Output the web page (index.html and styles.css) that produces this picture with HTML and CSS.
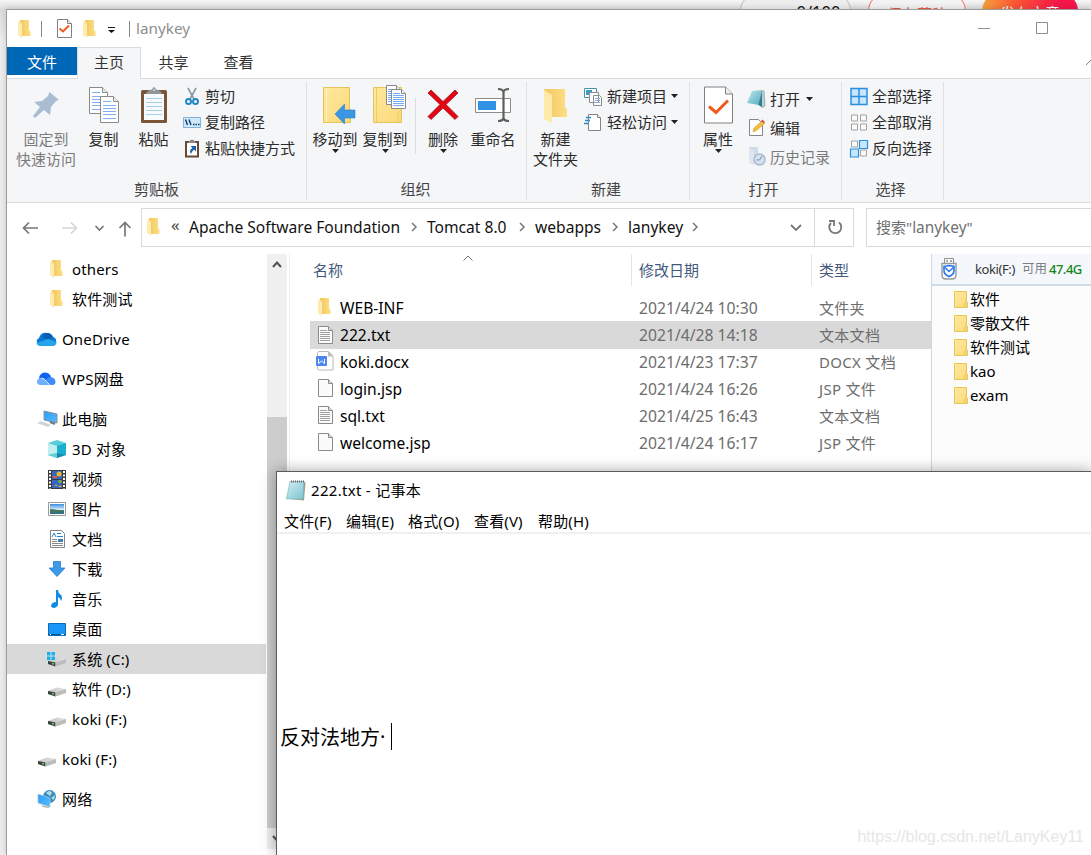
FILE: index.html
```html
<!DOCTYPE html>
<html lang="zh-CN">
<head>
<meta charset="utf-8">
<title>lanykey</title>
<link rel="stylesheet" href="styles.css">
</head>
<body>
<svg class="defs" aria-hidden="true">
  <defs>
    <linearGradient id="gold" x1="0" x2="1" y1="0" y2="1"><stop offset="0" stop-color="#ffe9a0"/><stop offset="1" stop-color="#fad978"/></linearGradient>
    <linearGradient id="goldEdge" x1="0" x2="1"><stop offset="0" stop-color="#f0c75f"/><stop offset="1" stop-color="#fddf85"/></linearGradient>
    <linearGradient id="teal" x1="0" x2="1" y1="0" y2="1"><stop offset="0" stop-color="#c3e9ef"/><stop offset="1" stop-color="#4fa9bf"/></linearGradient>
    <linearGradient id="pad" x1="0" x2="1" y1="0" y2="1"><stop offset="0" stop-color="#d3eff3"/><stop offset="1" stop-color="#7cc3d2"/></linearGradient>
    <linearGradient id="screen" x1="0" x2="1" y1="0" y2="1"><stop offset="0" stop-color="#2b9bf5"/><stop offset="1" stop-color="#5bbcff"/></linearGradient>
    <linearGradient id="metal" x1="0" x2="1"><stop offset="0" stop-color="#c4c4c4"/><stop offset="1" stop-color="#e4e4e4"/></linearGradient>
    <linearGradient id="sky" x2="0" y2="1"><stop offset="0" stop-color="#3b8de0"/><stop offset=".55" stop-color="#d6ecfa"/><stop offset=".6" stop-color="#4d8068"/><stop offset="1" stop-color="#2e6d8c"/></linearGradient>
  </defs>
  <symbol id="folder" viewBox="0 0 13 18"><path d="M2 0h9v10l1.5 1.5V16H3z" fill="url(#goldEdge)"/><path d="M0 .5L4 4v14L0 15z" fill="#ffeab0"/></symbol>
  <symbol id="folder-flat" viewBox="0 0 14 17"><path d="M.5.5h12v11h1v5H.5z" fill="url(#gold)" stroke="#e9c557"/><path d="M11 16v-4l1-1.5" fill="none" stroke="#e9c04a"/></symbol>
  <symbol id="page" viewBox="0 0 15 18"><path d="M.5.5h10l4 4v13H.5z" fill="#fbfbfb" stroke="#8b8b8b"/><path d="M10.500.5v4h4" fill="#ddd" stroke="#8b8b8b"/></symbol>
  <symbol id="text-page" viewBox="0 0 15 18"><use href="#page" width="15" height="18"/><path d="M2 4.500h7M2 6.500h10M2 8.500h10M2 10.500h10M2 12.500h10M2 14.500h10" stroke="#a0a0a0"/></symbol>
  <symbol id="check-page" viewBox="0 0 29 37"><path d="M.5.5h21l7 7v29H.5z" fill="#fff" stroke="#808080"/><path d="M21.500.5v7h7" fill="#eee" stroke="#808080"/><path d="M5 20l7 6L24 14" fill="none" stroke="#ef5a1d" stroke-width="3"/></symbol>
  <symbol id="drive" viewBox="0 0 18 10"><path d="M0 4L9 .5 18 2v4L7.500 9.500 0 7z" fill="url(#metal)"/><path d="M0 4l7.500 1.500V9.500L0 7z" fill="#3e3e3e"/><path d="M7.500 5.500L18 2v4L7.500 9.500z" fill="#bcbcbc"/><path d="M4 6.500l2 .5" stroke="#4fdc62" stroke-width="1.500"/></symbol>
  <symbol id="lined" viewBox="0 0 19 27"><path d="M.5.5h13l5 5v21H.5z" fill="#fff" stroke="#8a8a8a"/><path d="M13.500.5v5h5" fill="#eee" stroke="#8a8a8a"/><path d="M3 5.500h8M3 9.500h13M3 12.500h13M3 15.500h13M3 18.500h13M3 22.500h13" stroke="#7fb0f5"/></symbol>
  <symbol id="lined-sm" viewBox="0 0 15 20"><path d="M.5.5h10l4 4v15H.5z" fill="#fff" stroke="#8a8a8a"/><path d="M10.500.5v4h4" fill="#eee" stroke="#8a8a8a"/><path d="M2 4.500h7M2 6.500h11M2 8.500h11M2 10.500h11M2 12.500h11M2 14.500h11M2 16.500h11" stroke="#74a9f7"/></symbol>
  <symbol id="tri" viewBox="0 0 7 4"><path d="M0 0h7L3.500 4z" fill="#222"/></symbol>
</svg>

<div class="backdrop">
  <span class="pill count">0/100</span>
  <span class="pill draft">保存草稿</span>
  <span class="pill publish">发布文章</span>
</div>

<section class="explorer">
  <header class="titlebar">
    <svg class="tb-folder" width="13" height="18"><use href="#folder"/></svg>
    <i class="tb-sep"></i>
    <svg class="tb-check" width="15" height="19" viewBox="0 0 15 19"><path d="M.5.5h10l4 4v14H.5z" fill="#fff" stroke="#808080"/><path d="M10.500.5v4h4" fill="#eee" stroke="#808080"/><path d="M2.500 9.500l3.500 3 6-6" fill="none" stroke="#ef5a1d" stroke-width="2"/></svg>
    <svg class="tb-folder" width="13" height="18"><use href="#folder"/></svg>
    <svg class="tb-more" width="7" height="6" viewBox="0 0 7 6"><path d="M0 0h7v1H0zM0 3h7L3.500 6z" fill="#111"/></svg>
    <i class="tb-sep second"></i>
    <span class="tb-title">lanykey</span>
    <svg class="tb-ctl" width="71" height="13" viewBox="0 0 71 13" fill="none" stroke="#8f8f8f"><path d="M0 6.500h12M58.500.5h11v11h-11z"/></svg>
  </header>

  <nav class="tabs">
    <a class="tab file">文件</a><a class="tab active">主页</a><a class="tab">共享</a><a class="tab">查看</a>
    <svg class="collapse" width="12" height="7" viewBox="0 0 12 7"><path d="M1 6l5-5 5 5" fill="none" stroke="#888"/></svg>
  </nav>

  <div class="ribbon">
    <div class="group g-clip">
      <div class="tools">
        <div class="big pin muted"><svg width="28" height="36" viewBox="0 0 28 36"><path d="M17.500 5L27 13l-3 1-5 6-1 8-6-5L3 31l-2-2 7-9-6-5 8-1 6-5z" fill="#a9bcd3"/></svg><span>固定到<br>快速访问</span></div>
        <div class="big copy"><svg width="30" height="36" viewBox="0 0 30 36"><use href="#lined" width="19" height="27"/><use href="#lined" x="11" y="9" width="19" height="27"/></svg><span>复制</span></div>
        <div class="big paste"><svg width="26" height="36" viewBox="0 0 26 36"><rect width="26" height="33" y="3" rx="1.500" fill="#7a5538"/><path d="M3 7h20v26H3z" fill="#f7fbfd"/><path d="M5 11.500h16M5 15.500h16M5 19.500h16M5 23.500h16M5 27.500h16" stroke="#a7d0e8"/><path d="M5 7q1-4 6-4.500Q13-2.500 15 2.500q5 .5 6 4.500z" fill="#8f979b"/><circle cx="13" cy="3" r="1" fill="#ddd"/></svg><span>粘贴</span></div>
        <div class="smalls">
          <div class="small"><svg width="18" height="19" viewBox="0 0 18 19" fill="none"><path d="M5 1l6.500 12M13 1L6.500 13" stroke="#8c99a3" stroke-width="1.600"/><circle cx="5.500" cy="14.500" r="2.500" stroke="#2287c9" stroke-width="2"/><circle cx="12.500" cy="14.500" r="2.500" stroke="#2287c9" stroke-width="2"/></svg>剪切</div>
          <div class="small"><svg width="18" height="19" viewBox="0 0 18 19"><path d="M.5 4.500h17v10H.5z" fill="#cfe9fa" stroke="#7fb4dc"/><path d="M2.500 6.500l2 5.500M6 6.500l2 5.500M10 11.500h1.500M12.500 11.500H14M15 11.500h1.500" stroke="#163b66" stroke-width="1.400"/></svg>复制路径</div>
          <div class="small"><svg width="18" height="19" viewBox="0 0 18 19"><path d="M3 3h12v14.500H3z" fill="#fff" stroke="#68482f" stroke-width="2"/><path d="M5 4q0-2 4-3.500Q13 2 13 4z" fill="#888"/><path d="M7.500 7H13v5.500l-2-2Q8.500 13 8 15q-2.500-3.500 1.500-6z" fill="#1d5ea8"/></svg>粘贴快捷方式</div>
        </div>
      </div>
      <div class="caption">剪贴板</div>
    </div>

    <div class="group g-org">
      <div class="tools">
        <div class="big shifted"><svg width="34" height="38" viewBox="0 0 34 38"><path d="M1.500 1.500h26v22h1v13h-27z" fill="url(#gold)" stroke="#e6c25b"/><path d="M4.500 2v34" stroke="#fff3c5"/><path d="M13 28l9.500-10v6H33v8H22.500v6z" fill="#3b97e4" stroke="#2980cd" stroke-width=".6"/></svg><span>移动到</span><svg class="drop" width="7" height="4"><use href="#tri"/></svg></div>
        <div class="big shifted"><svg width="34" height="38" viewBox="0 0 34 38"><path d="M1.500 1.500h28v35h-28z" fill="url(#gold)" stroke="#e6c25b"/><path d="M4.500 2v34M26 36V27l3-3" fill="none" stroke="#efcc67"/><use href="#lined-sm" x="14" y="-1" width="15" height="20"/><use href="#lined-sm" x="19" y="3" width="15" height="20"/></svg><span>复制到</span><svg class="drop" width="7" height="4"><use href="#tri"/></svg></div>
        <i class="inner-sep"></i>
        <div class="big del"><svg width="32" height="38" viewBox="0 0 32 38"><path d="M1 7l3-3 12 11.500L28 4l3 3-12 11.500L31 30.500l-3 3L16 22 4 33.500l-3-3 12-12z" fill="#e30613" stroke="#a5121d" stroke-width=".8"/></svg><span>删除</span><svg class="drop" width="7" height="4"><use href="#tri"/></svg></div>
        <div class="big ren"><svg width="36" height="38" viewBox="0 0 36 38"><path d="M.5 12.500h35v14H.5z" fill="#fff" stroke="#8d8d8d"/><path d="M3 15h18v9H3z" fill="#2f92e4"/><path d="M23 3q5 0 5.500 3 .5-3 5.500-3M23 35q5 0 5.500-3 .5 3 5.500 3M28.500 5v28" fill="none" stroke="#5f5f5f" stroke-width="2.200"/></svg><span>重命名</span></div>
      </div>
      <div class="caption">组织</div>
    </div>

    <div class="group g-new">
      <div class="tools">
        <div class="big"><svg width="26" height="36" viewBox="0 0 26 36"><path d="M1 2h21v18l2 2v8H5z" fill="url(#goldEdge)"/><path d="M1 3l8 5v28l-8-4z" fill="#ffe9a8"/></svg><span>新建<br>文件夹</span></div>
        <div class="smalls">
          <div class="small"><svg width="18" height="19" viewBox="0 0 18 19" fill="#fff" stroke="#8c8c8c"><path d="M.5 1.500h12v9H.5z" stroke="#4a90a8"/><path d="M2 3h6v5H2z" fill="#3f9bc6" stroke="none"/><path d="M5.500 5.500h9v10h-9zM9.500 8.500h6l2 2v8h-8z"/><path d="M11 11.500h5M11 13.500h5M11 15.500h5" stroke="#88aadb"/></svg>新建项目<svg class="arrow" width="7" height="4"><use href="#tri"/></svg></div>
          <div class="small"><svg width="18" height="19" viewBox="0 0 18 19" fill="#fff"><path d="M4.500 1.500h9l3 3v13h-12z" stroke="#858585"/><path d="M13.500 1.500v3h3" stroke="#858585"/><path d="M2 4.500h5M1 7.500h5M0 10.500h4" stroke="#2d8cc8" stroke-width="1.300"/></svg>轻松访问<svg class="arrow" width="7" height="4"><use href="#tri"/></svg></div>
        </div>
      </div>
      <div class="caption">新建</div>
    </div>

    <div class="group g-open">
      <div class="tools">
        <div class="big"><svg width="29" height="37"><use href="#check-page"/></svg><span>属性</span><svg class="drop" width="7" height="4"><use href="#tri"/></svg></div>
        <div class="smalls">
          <div class="small"><svg width="19" height="19" viewBox="0 0 19 19"><path d="M14 1.500l3 .5 1 15-3 1.500-3-3z" fill="#bcd1d5" stroke="#7b898b" stroke-width=".6"/><path d="M5 2l10-1-3 15-12-2z" fill="url(#teal)"/><path d="M15 2l-3.500 14 3.500 2z" fill="#337c8f"/></svg>打开<svg class="arrow" width="7" height="4"><use href="#tri"/></svg></div>
          <div class="small"><svg width="19" height="19" viewBox="0 0 19 19"><path d="M2.500 1.500h9l4 4v12h-13z" fill="#fff" stroke="#858585"/><path d="M6 14l1-4 8-7 2.500 2.500-8 7z" fill="#f6bd38" stroke="#c78c20" stroke-width=".5"/><path d="M14 3l1.500-1.500L18 4l-1 1.500z" fill="#dd5148"/></svg>编辑</div>
          <div class="small muted"><svg width="19" height="19" viewBox="0 0 19 19"><path d="M2 0h9v16H5z" fill="#d0dbea"/><path d="M2 1l5 3v14l-5-2z" fill="#dfe6f2"/><circle cx="12.500" cy="12.500" r="5.500" fill="#d8e1ee" stroke="#aabbd1" stroke-width="1.500"/><path d="M15 9l-2.500 4H9.500" fill="none" stroke="#7c8faa"/></svg>历史记录</div>
        </div>
      </div>
      <div class="caption">打开</div>
    </div>

    <div class="group g-sel">
      <div class="tools">
        <div class="smalls">
          <div class="small"><svg width="18" height="19" viewBox="0 0 18 19"><path d="M1 1.500h8v8H1zM9 1.500h8v8H9zM1 9.500h8v8H1zM9 9.500h8v8H9z" fill="#c8e7fd" stroke="#2a8fdd" stroke-width="1.500"/></svg>全部选择</div>
          <div class="small"><svg width="18" height="19" viewBox="0 0 18 19"><path d="M1.500 2h6v6h-6zM10.500 2h6v6h-6zM1.500 11h6v6h-6zM10.500 11h6v6h-6z" fill="#fbfbfb" stroke="#a2a2a2"/></svg>全部取消</div>
          <div class="small"><svg width="18" height="19" viewBox="0 0 18 19"><path d="M1.500 2h6v6h-6zM10.500 11h6v6h-6z" fill="#fbfbfb" stroke="#a2a2a2"/><path d="M9.500 1.500h8v8h-8zM.5 10h8v8h-8z" fill="#c8e7fd" stroke="#2a8fdd" stroke-width="1.200"/></svg>反向选择</div>
        </div>
      </div>
      <div class="caption">选择</div>
    </div>
  </div>

  <div class="navrow">
    <svg class="arrows" width="112" height="20" viewBox="0 0 112 20" fill="none" stroke="#777" stroke-width="1.700"><path d="M16 10H1.500M7 4.500L1.500 10 7 15.500"/><path d="M40 10h14.500M49 4.500l5.500 5.500-5.500 5.500" stroke="#d6d6d6"/><path d="M73.500 8l4 4 4-4M103 18.500V4.500M97.500 10l5.500-5.500 5.500 5.500"/></svg>
    <div class="address">
      <svg width="13" height="18"><use href="#folder"/></svg>
      <span class="laquo">«</span>
      <span class="crumb c1">Apache Software Foundation</span><svg class="chev" width="6" height="10" viewBox="0 0 6 10"><path d="M1 1l4 4-4 4"/></svg>
      <span class="crumb c2">Tomcat 8.0</span><svg class="chev" width="6" height="10" viewBox="0 0 6 10"><path d="M1 1l4 4-4 4"/></svg>
      <span class="crumb c3">webapps</span><svg class="chev" width="6" height="10" viewBox="0 0 6 10"><path d="M1 1l4 4-4 4"/></svg>
      <span class="crumb c4">lanykey</span><svg class="chev" width="6" height="10" viewBox="0 0 6 10"><path d="M1 1l4 4-4 4"/></svg>
      <svg class="addr-drop" width="12" height="8" viewBox="0 0 12 8"><path d="M1 1l5 5 5-5" fill="none" stroke="#777" stroke-width="1.800"/></svg>
      <span class="refresh"><svg width="16" height="17" viewBox="0 0 16 17" fill="none" stroke="#777" stroke-width="1.800"><path d="M4 4a6 6 0 1 0 8-.5M2 2h5v5"/></svg></span>
    </div>
    <div class="search">搜索"<span>lanykey</span>"</div>
  </div>

  <main class="body">
    <aside class="tree">
      <ul class="child">
        <li><svg class="shift" width="13" height="18"><use href="#folder"/></svg>others</li>
        <li><svg class="shift" width="13" height="18"><use href="#folder"/></svg>软件测试</li>
      </ul>
      <ul><li><svg class="cloud" width="21" height="15" viewBox="0 0 21 15"><path d="M2 12Q-1 8 3 6 5 0 11 1q4 0 6 4 4 1 3 6l-3 3H4z" fill="#0a78d4"/><path d="M8 2q6-3 9 3l-5 3-6-3z" fill="#0860b4"/><path d="M5 14q-4 0-4.500-3L12 7l8.500 3q0 4-4 4z" fill="#28a4ea"/></svg>OneDrive</li></ul>
      <ul><li><svg class="cloud" width="21" height="15" viewBox="0 0 21 15"><path d="M3 6q1-5.500 6.500-5.500Q14 1 15 5l-5 4-6-1z" fill="#0d63f5"/><path d="M9 13q0-8 6-8 4.500 1 4.500 5 0 3-3.500 3z" fill="#3c8df8"/><path d="M4 13q-3-.5-3-3.500T5 6q4 0 5.500 3.500L14 13z" fill="#6db1fd"/><path d="M5 6q4 .5 5.500 3.500L14 13" fill="none" stroke="#fff" stroke-width=".8"/></svg>WPS网盘</li></ul>
      <ul><li><svg width="21" height="18" viewBox="0 0 21 18"><path d="M7 1l13 3v9L7 10z" fill="url(#screen)" stroke="#8593a0"/><path d="M13 12l5 2" stroke="#777" stroke-width="2"/><path d="M0 13l4-2 10 4-3 2z" fill="#d0d4d8"/></svg>此电脑</li></ul>
      <ul class="child flush">
        <li><svg width="18" height="18" viewBox="0 0 18 18"><path d="M0 3l9-3 9 3v12l-9 3-9-3z" fill="#57ced9"/><path d="M0 3l9 3v7l-9 2z" fill="#c3eff1"/><path d="M18 3L9 6v7l9 2z" fill="#1aaed0"/><path d="M9 13l9 2-9 3z" fill="#148da8"/><path d="M9 13l-9 2 9 3z" fill="#5fd0d6"/></svg>3D 对象</li>
        <li><svg width="18" height="19" viewBox="0 0 18 19"><path d="M0 0h18v19H0z" fill="#3c3c3c"/><path d="M4 1h10v8H4zM4 10h10v8H4z" fill="#3466c4"/><path d="M2 1v18M16 1v18" stroke="#fff" stroke-width="2" stroke-dasharray="2 1.500"/><circle cx="11" cy="4" r="2.500" fill="#e9b92f"/><path d="M5 6h4v2H5z" fill="#e0583f"/><circle cx="12" cy="11.500" r="1.800" fill="#7fae3a"/><path d="M6 16l2-1.500L10 16zM10 17l2-2 2 2z" fill="#e9a52c"/></svg>视频</li>
        <li><svg width="18" height="14" viewBox="0 0 18 14"><path d="M.5.5h17v13H.5z" fill="#fff" stroke="#999"/><path d="M2 2h14v10H2z" fill="url(#sky)"/><path d="M2 7q6 0 14 3H2z" fill="#44745e"/></svg>图片</li>
        <li><svg width="18" height="18" viewBox="0 0 18 18"><path d="M2.500.5h11l3 3v14h-14z" fill="#fff" stroke="#858585"/><path d="M4 7l2-4 2 4M9 3.500h4M9 6.500h6" fill="none" stroke="#2386c8"/><path d="M4 9.500h5M4 11.500h5M4 13.500h11M4 15.500h11" stroke="#888"/><path d="M10 9h5v3h-5z" fill="#3e7fb5"/></svg>文档</li>
        <li><svg width="18" height="18" viewBox="0 0 18 18"><path d="M5.500 1.500h7V8H17l-8 8.500L1 8h4.500z" fill="#3d9aea" stroke="#2b7bc6" stroke-width=".8"/></svg>下载</li>
        <li><svg width="18" height="18" viewBox="0 0 18 18"><path d="M8 0h2q0 3 3 5 2 3 0 6-.5-3-3-4v7q0 3-4 4-3-.5-3-2.500Q4 12 8 12z" fill="#0f8be6"/></svg>音乐</li>
        <li><svg width="18" height="13" viewBox="0 0 18 13"><path d="M.5.5h17v12H.5z" fill="#1996f7" stroke="#0d6cb8"/><path d="M1 11.500h16" stroke="#0c538f"/><path d="M2 11.500h1M13 11.500h3" stroke="#fff"/></svg>桌面</li>
        <li class="on"><svg width="18" height="15" viewBox="0 0 18 15"><use href="#drive" y="5" width="18" height="10"/><path d="M-1 0h3.500v3.500H-1zM3.500 0H7v3.500H3.500zM-1 4.500h3.500V8H-1zM3.500 4.500H7V8H3.500z" fill="#14b4f0"/></svg>系统 (C:)</li>
        <li><svg class="low" width="18" height="10"><use href="#drive"/></svg>软件 (D:)</li>
        <li><svg class="low" width="18" height="10"><use href="#drive"/></svg>koki (F:)</li>
      </ul>
      <ul><li><svg class="low" width="18" height="10"><use href="#drive"/></svg>koki (F:)</li></ul>
      <ul><li><svg width="18" height="18" viewBox="0 0 18 18"><circle cx="11.500" cy="6.500" r="6.500" fill="#388ebd"/><path d="M8 3q4-4 6 0l-2 3zM13 8l4-3-1 5z" fill="#b0dbe7"/><path d="M0 4l12 4v9L0 13z" fill="url(#screen)" stroke="#a2c8e2" stroke-width=".7"/><path d="M4 16l7 1.500" stroke="#b7b7b7" stroke-width="1.500"/></svg>网络</li></ul>
    </aside>
    <div class="scroll">
      <svg class="s-up" width="10" height="7" viewBox="0 0 10 7"><path d="M1 6l4-4.500L9 6"/></svg>
      <i class="thumb"></i>
      <svg class="s-down" width="10" height="7" viewBox="0 0 10 7"><path d="M1 1l4 4.500L9 1"/></svg>
    </div>
    <div class="files">
      <div class="row head"><span class="name">名称<svg class="sort" width="10" height="6" viewBox="0 0 10 6"><path d="M.5 5.500L5 1l4.500 4.500" fill="none" stroke="#777"/></svg></span><span class="date">修改日期</span><span class="type">类型</span></div>
      <div class="row"><span class="name"><svg width="15" height="18" viewBox="0 0 15 18"><use href="#folder" width="13" height="18"/></svg>WEB-INF</span><span class="date">2021/4/24 10:30</span><span class="type">文件夹</span></div>
      <div class="row on"><span class="name"><svg width="15" height="18"><use href="#text-page"/></svg>222.txt</span><span class="date">2021/4/28 14:18</span><span class="type">文本文档</span></div>
      <div class="row"><span class="name"><svg class="word" width="18" height="20" viewBox="0 0 18 20"><path d="M2.500.5h10l4.500 4.500v14H2.500q-1-.5-1-2v-15z" fill="#fff" stroke="#b9b9b9"/><path d="M12 .5v5h5z" fill="#bbb"/><rect y="5" width="11" height="10" rx="1" fill="#4d86ec"/><path d="M2.500 8v4.500l3-2.500 3 2.500V8" fill="none" stroke="#fff"/></svg>koki.docx</span><span class="date">2021/4/23 17:37</span><span class="type">DOCX 文档</span></div>
      <div class="row"><span class="name"><svg width="15" height="18"><use href="#page"/></svg>login.jsp</span><span class="date">2021/4/24 16:26</span><span class="type">JSP 文件</span></div>
      <div class="row"><span class="name"><svg width="15" height="18"><use href="#text-page"/></svg>sql.txt</span><span class="date">2021/4/25 16:43</span><span class="type">文本文档</span></div>
      <div class="row"><span class="name"><svg width="15" height="18"><use href="#page"/></svg>welcome.jsp</span><span class="date">2021/4/24 16:17</span><span class="type">JSP 文件</span></div>
    </div>
    <aside class="usb">
      <div class="usb-head"><svg width="16" height="22" viewBox="0 0 16 22"><path d="M3.500 7V.5h9V7" fill="#fff" stroke="#8c8c8c"/><path d="M5 3h2M9 3h2" stroke="#888" stroke-width="1.500"/><path d="M1 5.500h14V17q0 4-4 4H5q-4 0-4-4z" fill="#f8f8f8" stroke="#999" stroke-width="1.400"/><path d="M3 8.500l5-1 5 1v4q0 4-5 6-5-2-5-6z" fill="#fff" stroke="#2777f2" stroke-width="1.600"/><path d="M4 9.500l4 4 4.500-4" fill="none" stroke="#2777f2" stroke-width="1.600"/></svg><span class="usb-name">koki(F:)</span><span class="usb-free">可用</span><b>47.4G</b></div>
      <ul>
        <li><svg width="14" height="17"><use href="#folder-flat"/></svg>软件</li>
        <li><svg width="14" height="17"><use href="#folder-flat"/></svg>零散文件</li>
        <li><svg width="14" height="17"><use href="#folder-flat"/></svg>软件测试</li>
        <li><svg width="14" height="17"><use href="#folder-flat"/></svg>kao</li>
        <li><svg width="14" height="17"><use href="#folder-flat"/></svg>exam</li>
      </ul>
    </aside>
  </main>
</section>

<section class="notepad">
  <header class="np-title"><svg width="20" height="21" viewBox="0 0 20 21"><path d="M4 19l14 1.500 1.500-18-2-1z" fill="#a79c7e"/><path d="M4 1.500h14L17 19H.5z" fill="url(#pad)" stroke="#72aebb" stroke-width=".6"/><path d="M5 1.500h13" stroke="#656565" stroke-width="2" stroke-dasharray="1 1"/></svg><span>222.txt - 记事本</span></header>
  <nav class="menu"><span>文件(F)</span><span>编辑(E)</span><span>格式(O)</span><span>查看(V)</span><span>帮助(H)</span></nav>
  <div class="editor">反对法地方<span class="dot">·</span><i class="caret"></i></div>
</section>
<div class="watermark">https://blog.csdn.net/LanyKey11</div>
</body>
</html>
```
FILE: styles.css
```css
* { box-sizing: border-box; }
body {
  margin: 0; width: 1091px; height: 855px; overflow: hidden; position: relative;
  background: #eee; color: #111;
  font: 15px/20px "Noto Sans", "Noto Sans CJK SC", sans-serif;
}
ul { list-style: none; margin: 0; padding: 0; }
svg { display: block; flex: none; overflow: visible; }
.defs { position: absolute; width: 0; height: 0; }

.backdrop { position: absolute; left: 0; top: 0; width: 1091px; height: 60px; overflow: hidden; background: linear-gradient(#f6f6f6, #dcdcdc 10px, #eee 40px); }
.pill { position: absolute; top: -7px; height: 36px; line-height: 41px; border-radius: 18px; text-align: center; font-size: 15px; overflow: hidden; }
.count { left: 740px; width: 111px; border: 1px solid #bbb; background: #eee; padding-left: 46px; font-size: 16.5px; line-height: 36px; }
.draft { left: 868px; width: 98px; border: 1px solid #f0694f; color: #e8573c; background: #f3f3f3; }
.publish { left: 982px; width: 96px; background: linear-gradient(90deg, #f6a13c, #fc5535 35%, #f5164a 80%); color: #fff; }

.explorer {
  position: absolute; left: 6px; top: 9px; width: 1086px; height: 846px; background: #fff;
  border: 1px solid #9b9b9b; border-width: 1px 0 0 1px; box-shadow: 0 0 7px rgba(0,0,0,.16);
  display: flex; flex-direction: column;
}
.titlebar { height: 37px; flex: none; display: flex; align-items: center; padding-left: 11px; }
.tb-sep { width: 1px; height: 16px; background: #888; margin: 0 15px 0 10px; }
.tb-check { margin-right: 11px; }
.tb-more { margin: 3px 14px 0 12px; }
.tb-sep.second { margin: 0 6px 0 0; }
.tb-title { color: #8e8e8e; font-size: 15.3px; margin-top: -2px; }
.tb-ctl { margin-left: auto; margin-right: 43px; }

.tabs { height: 31px; flex: none; display: flex; }
.tab { width: 65px; height: 31px; line-height: 31px; text-align: center; color: #333; }
.tab.file { width: 70px; height: 28px; line-height: 30px; background: #0067b6; color: #fff; }
.tab.active { width: 64px; background: #f5f6f7; border: 1px solid #dadbdc; border-bottom: 0; line-height: 29px; height: 32px; position: relative; z-index: 1; }
.collapse { margin: 12px -5px 0 auto; }

.ribbon { height: 125px; flex: none; display: flex; background: #f5f6f8; border: 1px solid #dadbdc; border-width: 1px 0; color: #2b2b2b; }
.group { height: 118px; margin-top: 3px; border-right: 1px solid #dfe0e2; display: flex; flex-direction: column; }
.tools { display: flex; height: 97px; padding-top: 4px; }
.caption { text-align: center; color: #444; height: 20px; line-height: 20px; margin-right: 5px; }
.g-clip { width: 300px; padding-left: 5px; }
.g-org { width: 220px; padding-left: 3px; }
.g-new { width: 163px; }
.g-open { width: 152px; padding-left: 3px; }
.g-sel { width: 102px; padding-left: 8px; }
.g-sel .caption { margin-right: 12px; }
.g-new .caption { margin-right: 4px; }
.g-open .caption { margin-right: 7px; }
.big { width: 50px; display: flex; flex-direction: column; align-items: center; white-space: nowrap; text-align: center; }
.big > svg:first-child { height: 38px; }
.big.shifted > svg:first-child { margin-left: 7px; }
.big > span { margin-top: 5px; }
.g-clip .pin { width: 68px; }
.g-clip .copy { width: 47px; }
.g-clip .paste { width: 53px; }
.g-new .big { width: 57px; }
.inner-sep { width: 1px; height: 56px; background: #dcdddf; margin: 12px 2px 0 5px; }
.muted { color: #7b7b7b; }
.smalls { margin-top: -3px; }
.g-clip .smalls { margin-left: 3px; }
.g-open .smalls { margin: -2px 0 0 4px; }
.small { height: 26px; display: flex; align-items: center; gap: 4px; white-space: nowrap; }
.g-new .small { gap: 5px; }
.g-open .small { height: 29px; gap: 4px; }
.g-new .arrow { margin-left: -1px; }
.g-open .arrow { margin-left: 2px; }

.navrow { height: 51px; flex: none; display: flex; padding: 5px 0 0 15px; }
.arrows { margin: 10px 7px 0 0; }
.address { width: 713px; height: 39px; border: 1px solid #d9d9d9; display: flex; align-items: center; padding-left: 5px; }
.address > svg:first-child { margin-top: -1px; }
.laquo { width: 12px; margin: -5px 6px 0 11px; font-size: 17px; color: #444; }
.crumb { margin: -2px 11px 0 0; white-space: nowrap; font-size: 15.6px; }
.c1 { width: 211px; } .c2 { width: 81px; } .c3 { width: 66px; } .c4 { width: 53px; }
.chev { fill: none; stroke: #777; stroke-width: 1.500; margin: 0 10px 2px 0; }
.addr-drop { margin-left: auto; margin-right: 12px; }
.refresh { width: 39px; height: 37px; border-left: 1px solid #d9d9d9; display: flex; align-items: center; justify-content: center; padding-left: 2px; }
.search { flex: 1; margin-left: 12px; height: 39px; line-height: 37px; border: 1px solid #d9d9d9; border-right: 0; padding-left: 9px; color: #707070; }
.search span { font-size: 15.400px; }

.body { flex: 1; min-height: 0; display: flex; }
.tree { width: 259px; flex: none; color: #000; letter-spacing: .15px; }
.tree ul + ul { margin-top: 10px; }
.tree ul.flush { margin-top: 0; }
.tree li { height: 30px; padding-left: 30px; display: flex; align-items: center; white-space: nowrap; }
.tree li svg { margin-right: 4px; }
.tree li .cloud { margin-left: -1px; margin-right: 5px; }
.tree li svg[width="18"] { margin-left: 1px; margin-right: 6px; }
.tree .child li { padding-left: 40px; }
.tree .child li svg.shift { margin-left: 3px; margin-right: 9px; }
.tree .low { margin-top: 6px; }
.tree .on { background: #d9d9d9; }
.scroll { width: 20px; height: 595px; margin-left: 1px; background: #f0f0f0; flex: none; display: flex; flex-direction: column; align-items: center; }
.scroll svg { fill: none; stroke: #505050; stroke-width: 2; }
.s-up { margin: 7px 0 149px; }
.thumb { width: 20px; height: 411px; background: #cdcdcd; }
.s-down { margin-top: 7px; }
.files { width: 642px; flex: none; margin-left: 2px; border-left: 1px solid #f1f1f1; padding-left: 20px; }
.row { display: flex; align-items: center; height: 27px; color: #6d6d6d; }
.row.head { height: 32px; margin-bottom: 8px; color: #44597b; }
.name { width: 321px; height: 100%; display: flex; align-items: center; padding-left: 8px; color: #000; font-size: 15.600px; }
.name svg { margin: -1px 7px 0 0; }
.name .word { margin: -1px 6px 0 -2px; }
.head .name { color: inherit; padding-left: 3px; align-items: flex-start; line-height: 33px; font-size: 15px; }
.name .sort { margin: 1px 0 0 120px; }
.date { width: 180px; padding-left: 8px; white-space: nowrap; font-size: 15.700px; }
.type { padding-left: 8px; white-space: nowrap; letter-spacing: .3px; }
.head .date, .head .type { height: 32px; line-height: 33px; border-left: 1px solid #e5e5e5; padding-left: 7px; font-size: 15px; letter-spacing: 0; }
.row.on { background: #d9d9d9; height: 28px; margin-bottom: -1px; }
.usb { flex: 1; border-left: 1px solid #ccd9e4; background: #fcfcfc; color: #000; }
.usb-head { height: 32px; border-bottom: 2px solid #d0dce7; background: #f4f8fd; display: flex; align-items: center; padding-left: 9px; font-size: 13px; white-space: nowrap; }
.usb-name { width: 41px; margin-left: 18px; color: #333; letter-spacing: -.4px; }
.usb-free { width: 26px; margin: 0 1px 0 6px; color: #7d7d7d; font-size: 12.500px; }
.usb-head b { color: #168516; font-weight: 500; letter-spacing: -.5px; }
.usb ul { padding-top: 1px; }
.usb li { height: 24px; padding-left: 22px; display: flex; align-items: center; gap: 2px; }

.notepad { position: absolute; left: 276px; top: 471px; width: 816px; height: 385px; background: #fff; border: 1px solid #5c5c5c; border-right: 0; box-shadow: 0 0 14px rgba(0,0,0,.35); color: #000; }
.np-title { height: 37px; display: flex; align-items: center; gap: 5px; padding-left: 9px; letter-spacing: .3px; }
.np-title span { margin-top: -2px; }
.menu { height: 25px; display: flex; padding-left: 7px; line-height: 25px; border-bottom: 2px solid #f0f0f0; letter-spacing: .15px; }
.menu span { width: 62px; white-space: nowrap; }
.menu span:nth-child(3) { width: 66px; }
.menu span:nth-child(4) { width: 64px; }
.editor { padding: 189px 0 0 3px; font: 20px/28px "Noto Sans CJK SC", sans-serif; display: flex; }
.dot { font-family: "Noto Sans", sans-serif; }
.caret { width: 1px; height: 27px; background: #000; margin-left: 6px; }
.watermark { position: absolute; right: 7px; top: 827px; font: 16px/20px "Liberation Sans", sans-serif; color: #e6e6e6; white-space: nowrap; }
```
